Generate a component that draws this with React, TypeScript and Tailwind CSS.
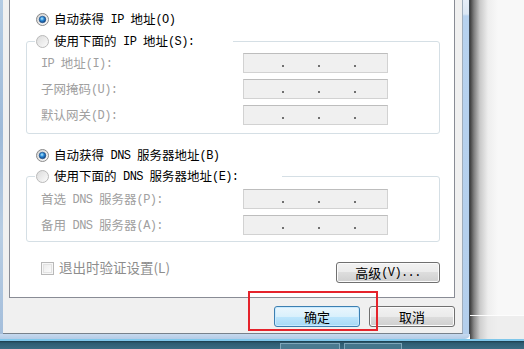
import { useId } from "react"

// half-width runs (latin, digits, brackets) get the narrow mono face, like SimSun
function Mixed({ text }: { text: string }) {
  const parts = text.split(/([\x00-\x7f]+)/).filter(Boolean)
  return (
    <>
      {parts.map((p, i) =>
        /^[\x00-\x7f]+$/.test(p) ? (
          <span key={i} className="whitespace-pre align-[1px] font-['Liberation_Mono',monospace] text-[12px] tracking-[-0.6px]">
            {p}
          </span>
        ) : (
          <span key={i}>{p}</span>
        )
      )}
    </>
  )
}

function RadioGlyph({ checked }: { checked: boolean }) {
  const id = useId().replace(/:/g, "")
  return (
    <svg width="13" height="13" viewBox="0 0 13 13" className="shrink-0">
      <defs>
        <linearGradient id={`ring${id}`} x1="0" y1="0" x2="1" y2="1">
          <stop offset="0" stopColor={checked ? "#cfcfcf" : "#dadada"} />
          <stop offset="1" stopColor="#fdfdfd" />
        </linearGradient>
        <radialGradient id={`dot${id}`} cx="0.42" cy="0.38" r="0.65">
          <stop offset="0" stopColor="#b6ecff" />
          <stop offset="0.45" stopColor="#2c8ad6" />
          <stop offset="1" stopColor="#0c3a78" />
        </radialGradient>
      </defs>
      <circle cx="6.5" cy="6.5" r="6" fill={`url(#ring${id})`} stroke={checked ? "#8b8b8b" : "#b9b9b9"} />
      {checked && <circle cx="6.5" cy="6.5" r="3.3" fill={`url(#dot${id})`} stroke="#1b4c85" strokeWidth="0.6" />}
    </svg>
  )
}

function Radio({ checked, label }: { checked: boolean; label: string }) {
  return (
    <div className="flex h-[20px] items-center gap-[5px]">
      <RadioGlyph checked={checked} />
      <span className="pt-[1px] text-[12.5px] leading-none text-black">
        <Mixed text={label} />
      </span>
    </div>
  )
}

function IpBox() {
  return (
    <div className="flex h-[20px] w-[145px] items-end gap-[34px] border border-[#d2d2d2] border-t-[#bdbdbd] bg-[#f0f0f0] pb-[5px] pl-[38px]">
      <div className="h-[2px] w-[2px] bg-[#707070]" />
      <div className="h-[2px] w-[2px] bg-[#707070]" />
      <div className="h-[2px] w-[2px] bg-[#707070]" />
    </div>
  )
}

function FieldRow({ label }: { label: string }) {
  return (
    <div className="flex h-[20px] items-center">
      <span className="w-[202px] pt-[1px] text-[12.5px] leading-none text-[#a0a0a0]">
        <Mixed text={label} />
      </span>
      <IpBox />
    </div>
  )
}

function WinButton({ label, primary }: { label: string; primary?: boolean }) {
  return (
    <button
      type="button"
      className={
        primary
          ? "flex h-[21px] w-[86px] items-center justify-center rounded-[3px] border border-[#3c7fb1] bg-[linear-gradient(to_bottom,#eaf6fd_0%,#d9f0fc_50%,#bee6fd_50%,#a7d9f5_100%)] text-[13px] leading-none text-black shadow-[inset_0_0_0_1px_#c9eaff]"
          : "flex h-[21px] w-[86px] items-center justify-center rounded-[3px] border border-[#707070] bg-[linear-gradient(to_bottom,#f2f2f2_0%,#ebebeb_50%,#dddddd_50%,#cfcfcf_100%)] text-[13px] leading-none text-black shadow-[inset_0_0_0_1px_#fbfbfb]"
      }
    >
      <Mixed text={label} />
    </button>
  )
}

export default function App() {
  return (
    <div className="relative flex h-[349px] w-[524px] flex-col overflow-hidden font-['Noto_Sans_CJK_SC',sans-serif]">
      <div className="flex h-[339px]">
        {/* window */}
        <div className="flex w-[470px] flex-col">
          <div className="flex h-[334px]">
            <div className="w-[3px] bg-[linear-gradient(to_bottom,#b3cbe3,#9db9d8_40%,#b8cde3_70%,#a4bedb)]" />
            <div className="flex w-[460px] flex-col border-r border-b border-r-[#9eacbb] border-b-[#77818b] bg-[#f0f0f0] pl-[6px]">
              {/* tab page */}
              <div className="w-[446px] border border-t-0 border-[#898c95] bg-white pt-[9px] pb-[14px]">
                <div className="pl-[26px]">
                  <Radio checked label="自动获得 IP 地址(O)" />
                </div>
                <fieldset className="mt-[2px] ml-[16px] w-[414px] rounded-[3px] border border-[#d5dfe5] px-[8px] pt-[2px] pb-[8px]">
                  <legend className="w-[198px] pl-[1px]">
                    <Radio checked={false} label="使用下面的 IP 地址(S):" />
                  </legend>
                  <div className="flex flex-col gap-[6px] pl-[6px]">
                    <FieldRow label="IP 地址(I):" />
                    <FieldRow label="子网掩码(U):" />
                    <FieldRow label="默认网关(D):" />
                  </div>
                </fieldset>
                <div className="mt-[11px] pl-[26px]">
                  <Radio checked label="自动获得 DNS 服务器地址(B)" />
                </div>
                <fieldset className="mt-[1px] ml-[16px] w-[414px] rounded-[3px] border border-[#d5dfe5] px-[8px] pt-[3px] pb-[6px]">
                  <legend className="w-[247px] pl-[1px]">
                    <Radio checked={false} label="使用下面的 DNS 服务器地址(E):" />
                  </legend>
                  <div className="flex flex-col gap-[6px] pl-[6px]">
                    <FieldRow label="首选 DNS 服务器(P):" />
                    <FieldRow label="备用 DNS 服务器(A):" />
                  </div>
                </fieldset>
                <div className="mt-[16px] flex items-start justify-between pr-[14px] pl-[31px]">
                  <div className="flex h-[20px] items-center gap-[5px]">
                    <div className="flex h-[13px] w-[13px] items-center justify-center border border-[#b8b8b8] bg-[#f7f7f7]">
                      <div className="h-[9px] w-[9px] border border-[#e2e2e2] bg-[linear-gradient(135deg,#ececec,#fbfbfb)]" />
                    </div>
                    <span className="text-[13.5px] leading-none text-[#8d8d8d]">退出时验证设置(L)</span>
                  </div>
                  <button
                    type="button"
                    className="mt-[4px] flex h-[21px] w-[104px] items-center justify-center rounded-[3px] border border-[#707070] bg-[linear-gradient(to_bottom,#f2f2f2_0%,#ebebeb_50%,#dddddd_50%,#cfcfcf_100%)] text-[13px] leading-none text-black shadow-[inset_0_0_0_1px_#fbfbfb]"
                  >
                    <Mixed text="高级(V)..." />
                  </button>
                </div>
              </div>
              <div className="flex w-[446px] justify-end gap-[9px] pt-[8px]">
                <WinButton primary label="确定" />
                <WinButton label="取消" />
              </div>
            </div>
            <div className="w-[7px] border-r border-r-[#3f4a55] bg-[linear-gradient(to_bottom,#e6eef8_0px,#dbe7f4_14px,#b7d2ef_16px,#b4cfec_100%)]" />
          </div>
          <div className="h-[5px] rounded-br-[6px] bg-[linear-gradient(to_bottom,#c6d9ee,#b3cbe6)]" />
        </div>
        {/* desktop behind */}
        <div className="flex flex-1 flex-col">
          <div className="flex-1 bg-[linear-gradient(to_right,#3c3c3c_0px,#7f7f7f_4px,#c9c9c9_10px,#eeeeee_18px,#f8f8f8_28px)]" />
          <div className="h-[24px] border-t border-t-[#fdfdfd] bg-[linear-gradient(to_right,#444444_0px,#8a8a8a_4px,#cfcfcf_10px,#e9e9e9_18px,#eeeeee_28px)]" />
        </div>
      </div>
      {/* taskbar */}
      <div className="flex h-[10px] border-t-2 border-t-[#7fc7ea] bg-[linear-gradient(to_bottom,#1b3c4b_0px,#2d5c71_2px,#3b6c83_100%)]">
        <div className="w-[280px]" />
        <div className="mt-[2px] w-[60px] border-x border-t border-[#7fa7ba] bg-[#4a7a90]" />
        <div className="w-[4px]" />
        <div className="mt-[2px] w-[58px] border-x border-t border-[#7fa7ba] bg-[#44758b]" />
      </div>
      {/* red annotation box */}
      <div className="absolute top-[291px] left-[248px] h-[40px] w-[130px] border-2 border-[#e5232b]" />
    </div>
  )
}
